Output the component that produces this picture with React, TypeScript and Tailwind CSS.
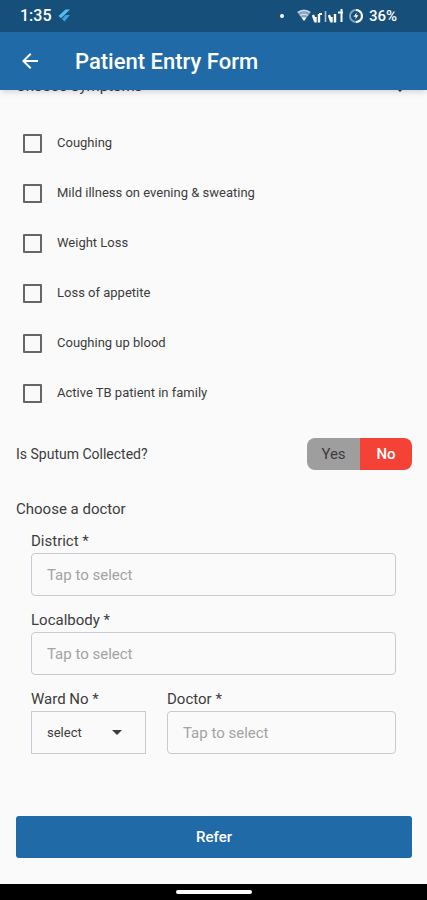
import { useState } from 'react';
import clsx from 'clsx';

const symptoms = [
  'Coughing',
  'Mild illness on evening & sweating',
  'Weight Loss',
  'Loss of appetite',
  'Coughing up blood',
  'Active TB patient in family',
];

function StatusBar() {
  return (
    <div className="flex h-8 items-center justify-between bg-[#174f7b] pl-5 pr-[30px] text-white">
      <div className="flex items-center gap-x-1.5">
        <span className="text-base font-medium">1:35</span>
        <svg width="12" height="14" viewBox="0 0 12 14" aria-hidden="true">
          <path d="M7.5 0.5H12L3 9.2L0.5 7Z" fill="#56bdf2" />
          <path d="M7.5 6H12L6.5 12.5L4 10Z" fill="#3f9fe0" />
        </svg>
      </div>
      <div className="flex items-center">
        <span className="mr-[13px] size-1 rounded-full bg-white" />
        <svg width="68" height="16" viewBox="0 0 68 16" fill="none" aria-hidden="true">
          <path d="M0 4Q7 -1 14 4L7 13Z" fill="#7f9fba" />
          <path d="M1 4.5Q7 0.5 13 4.5M3 7.5Q7 5 11 7.5" stroke="#c9d9e5" strokeWidth="1.4" />
          <path d="M4.5 9.5H9.5L7 13Z" fill="#fff" />
          <path d="M16 7L18 13M18.5 9V14.5M22 6V14.5" stroke="#fff" strokeWidth="2.4" />
          <path d="M22 6H25" stroke="#fff" strokeWidth="2" />
          <path d="M28.5 3V14" stroke="#a9c3d6" strokeWidth="1.6" />
          <path d="M32 7L34 13M34.5 9V14.5M38 6V14.5" stroke="#fff" strokeWidth="2.4" />
          <path d="M44.5 1V14M41 4.5H46" stroke="#fff" strokeWidth="2" />
          <circle cx="59" cy="8" r="6" stroke="#7fa3bf" strokeWidth="2" />
          <path d="M59 2A6 6 0 0 1 59 14" stroke="#fff" strokeWidth="2" />
          <path d="M59.8 4.5L56.5 8.7H58.8L58.2 11.5L61.5 7.3H59.2Z" fill="#fff" />
        </svg>
        <span className="ml-1 text-[15px] font-medium">36%</span>
      </div>
    </div>
  );
}

type TapFieldProps = {
  id: string;
  label: string;
  className?: string;
};

function TapField({ id, label, className }: TapFieldProps) {
  return (
    <div className={clsx('flex flex-col', className)}>
      <label htmlFor={id} className="text-[15px] leading-6">
        {label} *
      </label>
      <input
        id={id}
        type="text"
        placeholder="Tap to select"
        className="h-[43px] w-full rounded border border-[#c9c9d3] bg-transparent px-[15px] text-[15px] outline-none placeholder:text-[#a3a3a3]"
      />
    </div>
  );
}

export default function App() {
  const [checked, setChecked] = useState<string[]>([]);
  const [collected, setCollected] = useState(false);

  const toggle = (name: string) => {
    setChecked((prev) =>
      prev.includes(name) ? prev.filter((x) => x !== name) : [...prev, name]
    );
  };

  return (
    <div className="flex min-h-screen flex-col bg-[#fafafa] font-[Roboto,sans-serif] text-[#3c3c3c]">
      <header className="relative z-10 shadow-md">
        <StatusBar />
        <div className="flex h-[58px] items-center gap-x-[33px] bg-[#206aa7] px-[18px] text-white">
          <button type="button" aria-label="Back">
            <svg width="24" height="24" viewBox="0 0 24 24" fill="currentColor">
              <path d="M20 11H7.83l5.59-5.59L12 4l-8 8 8 8 1.41-1.41L7.83 13H20v-2z" />
            </svg>
          </button>
          <h1 className="text-[22px] font-medium">Patient Entry Form</h1>
        </div>
      </header>

      <form className="flex flex-1 flex-col pl-4 pr-[15px]" onSubmit={(e) => e.preventDefault()}>
        {/* section title is scrolled under the app bar */}
        <div className="-mt-4 flex h-6 items-end justify-between">
          <h2 className="text-[15px] leading-6">Choose Symptoms</h2>
          <svg width="24" height="22" viewBox="0 0 24 22" fill="currentColor" aria-hidden="true">
            <path d="M16.59 8.59L12 13.17 7.41 8.59 6 10l6 6 6-6z" />
          </svg>
        </div>

        <div className="mt-5 flex flex-col">
          {symptoms.map((name) => (
            <label key={name} className="flex h-[50px] items-center gap-x-[15px] pl-[7px] text-[13px]">
              <input
                type="checkbox"
                checked={checked.includes(name)}
                onChange={() => toggle(name)}
                className="size-[19px] appearance-none rounded-[1px] border-2 border-[#666] checked:bg-[#206aa7]"
              />
              {name}
            </label>
          ))}
        </div>

        <div className="mt-5 flex items-center justify-between">
          <span className="text-sm">Is Sputum Collected?</span>
          <div className="flex h-8 overflow-hidden rounded-lg text-[15px]">
            <button
              type="button"
              aria-pressed={collected}
              onClick={() => setCollected(true)}
              className={clsx('w-[53px]', collected ? 'bg-[#f44336] text-white' : 'bg-[#9e9e9e]')}
            >
              Yes
            </button>
            <button
              type="button"
              aria-pressed={!collected}
              onClick={() => setCollected(false)}
              className={clsx(
                'w-[52px] font-medium',
                collected ? 'bg-[#9e9e9e]' : 'bg-[#f44336] text-white'
              )}
            >
              No
            </button>
          </div>
        </div>

        <h2 className="mt-[27px] text-[15px] leading-6">Choose a doctor</h2>
        <div className="mt-2 flex flex-col gap-y-3 pl-[15px] pr-4">
          <TapField id="district" label="District" />
          <TapField id="localbody" label="Localbody" />
          <div className="flex gap-x-[21px]">
            <div className="flex w-[115px] flex-col">
              <label htmlFor="ward" className="text-[15px] leading-6">
                Ward No *
              </label>
              <div className="relative">
                <select
                  id="ward"
                  className="h-[43px] w-full appearance-none border border-[#c9c9d3] bg-transparent px-[15px] text-[13px] outline-none"
                >
                  <option>select</option>
                </select>
                <svg
                  width="10"
                  height="5"
                  viewBox="0 0 10 5"
                  className="pointer-events-none absolute right-6 top-[19px]"
                  aria-hidden="true"
                >
                  <path d="M0 0h10L5 5z" fill="#3c3c3c" />
                </svg>
              </div>
            </div>
            <TapField id="doctor" label="Doctor" className="min-w-0 flex-1" />
          </div>
        </div>

        <button
          type="submit"
          className="mb-[26px] mt-auto h-[42px] rounded-[3px] bg-[#206aa7] text-[15px] font-medium text-white"
        >
          Refer
        </button>
      </form>

      <div className="flex h-4 items-center justify-center bg-black">
        <div className="h-1 w-[76px] rounded-full bg-white" />
      </div>
    </div>
  );
}
